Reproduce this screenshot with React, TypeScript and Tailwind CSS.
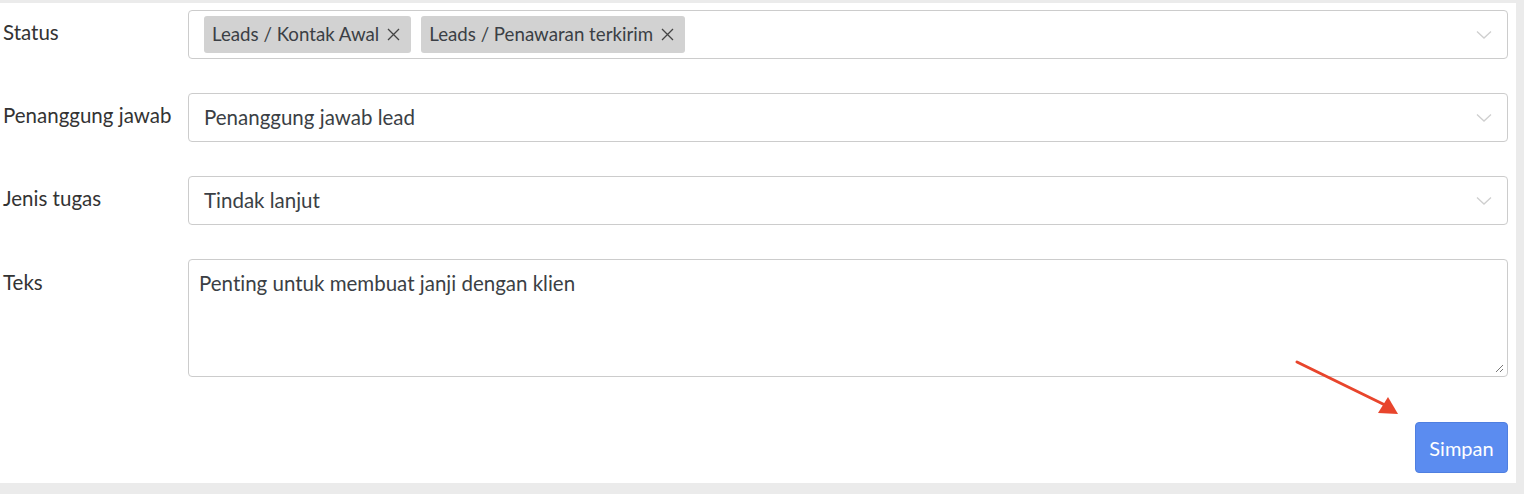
import React from "react";

const font = { fontFamily: 'Lato, "Noto Sans", sans-serif', fontVariantLigatures: "none" as const };

function Chevron() {
  return (
    <svg width="16" height="10" viewBox="0 0 16 10" fill="none" className="shrink-0">
      <path d="M1 1.5 L8 8 L15 1.5" stroke="#cfcfcf" strokeWidth="1.3" />
    </svg>
  );
}

function Cross() {
  return (
    <svg width="15" height="15" viewBox="0 0 15 15" fill="none" className="shrink-0">
      <path d="M2 2 L13 13 M13 2 L2 13" stroke="#444" strokeWidth="1.3" />
    </svg>
  );
}

function Chip({ label }: { label: string }) {
  return (
    <div className="flex h-[37px] items-center gap-[7px] rounded-[3px] bg-[#d2d2d2] pl-[8px] pr-[10px] text-[18.7px] text-[#3b3f45]">
      <span>{label}</span>
      <Cross />
    </div>
  );
}

function Row({ label, children, top }: { label: string; children: React.ReactNode; top?: boolean }) {
  return (
    <div className={`grid grid-cols-[185px_1fr] ${top ? "items-start" : "items-center"}`}>
      <div className={`text-[20.5px] text-[#333] ${top ? "pt-[8px]" : "pb-[4px]"}`}>{label}</div>
      {children}
    </div>
  );
}

function SelectBox({ children }: { children: React.ReactNode }) {
  return (
    <div className="flex h-[49px] items-center justify-between rounded-[4px] border border-[#cccccc] pl-[15px] pr-[15px] text-[20.5px] text-[#3b3f45]">
      <div className="flex items-center gap-[10px]">{children}</div>
      <Chevron />
    </div>
  );
}

export default function App() {
  return (
    <div className="h-[494px] w-[1524px] bg-[#ebebeb] pt-[3px] pr-[8px] pb-[11px]" style={font}>
      <div className="relative flex h-full flex-col bg-white pl-[3px] pr-[8px] pt-[7px]">
        <div className="flex flex-col gap-[34px]">
          <Row label="Status">
            <div className="flex h-[49px] items-center justify-between rounded-[4px] border border-[#cccccc] pl-[15px] pr-[15px]">
              <div className="flex items-center gap-[10px]">
                <Chip label="Leads / Kontak Awal" />
                <Chip label="Leads / Penawaran terkirim" />
              </div>
              <Chevron />
            </div>
          </Row>
          <Row label="Penanggung jawab">
            <SelectBox>Penanggung jawab lead</SelectBox>
          </Row>
          <Row label="Jenis tugas">
            <SelectBox>Tindak lanjut</SelectBox>
          </Row>
          <Row label="Teks" top>
            <div className="relative h-[118px] rounded-[4px] border border-[#cccccc] px-[10px] pt-[8px] text-[20.5px] text-[#3b3f45]">
              Penting untuk membuat janji dengan klien
              <svg width="10" height="10" viewBox="0 0 10 10" className="absolute bottom-[3px] right-[3px]">
                <path d="M9 2 L2 9 M9 6 L6 9" stroke="#777" strokeWidth="1" />
              </svg>
            </div>
          </Row>
        </div>
        <div className="mt-[45px] flex justify-end">
          <button className="h-[51px] w-[93px] rounded-[4px] border border-[#4f7fe0] bg-[#5b8cf0] text-[20px] text-white">
            Simpan
          </button>
        </div>
        <svg
          width="120"
          height="70"
          viewBox="0 0 120 70"
          className="pointer-events-none absolute left-[1290px] top-[352px]"
        >
          <path d="M7 7 L95 50" stroke="#e8452c" strokeWidth="3" strokeLinecap="round" />
          <path d="M108 59 L88 58 L98 42 Z" fill="#e8452c" />
        </svg>
      </div>
    </div>
  );
}
